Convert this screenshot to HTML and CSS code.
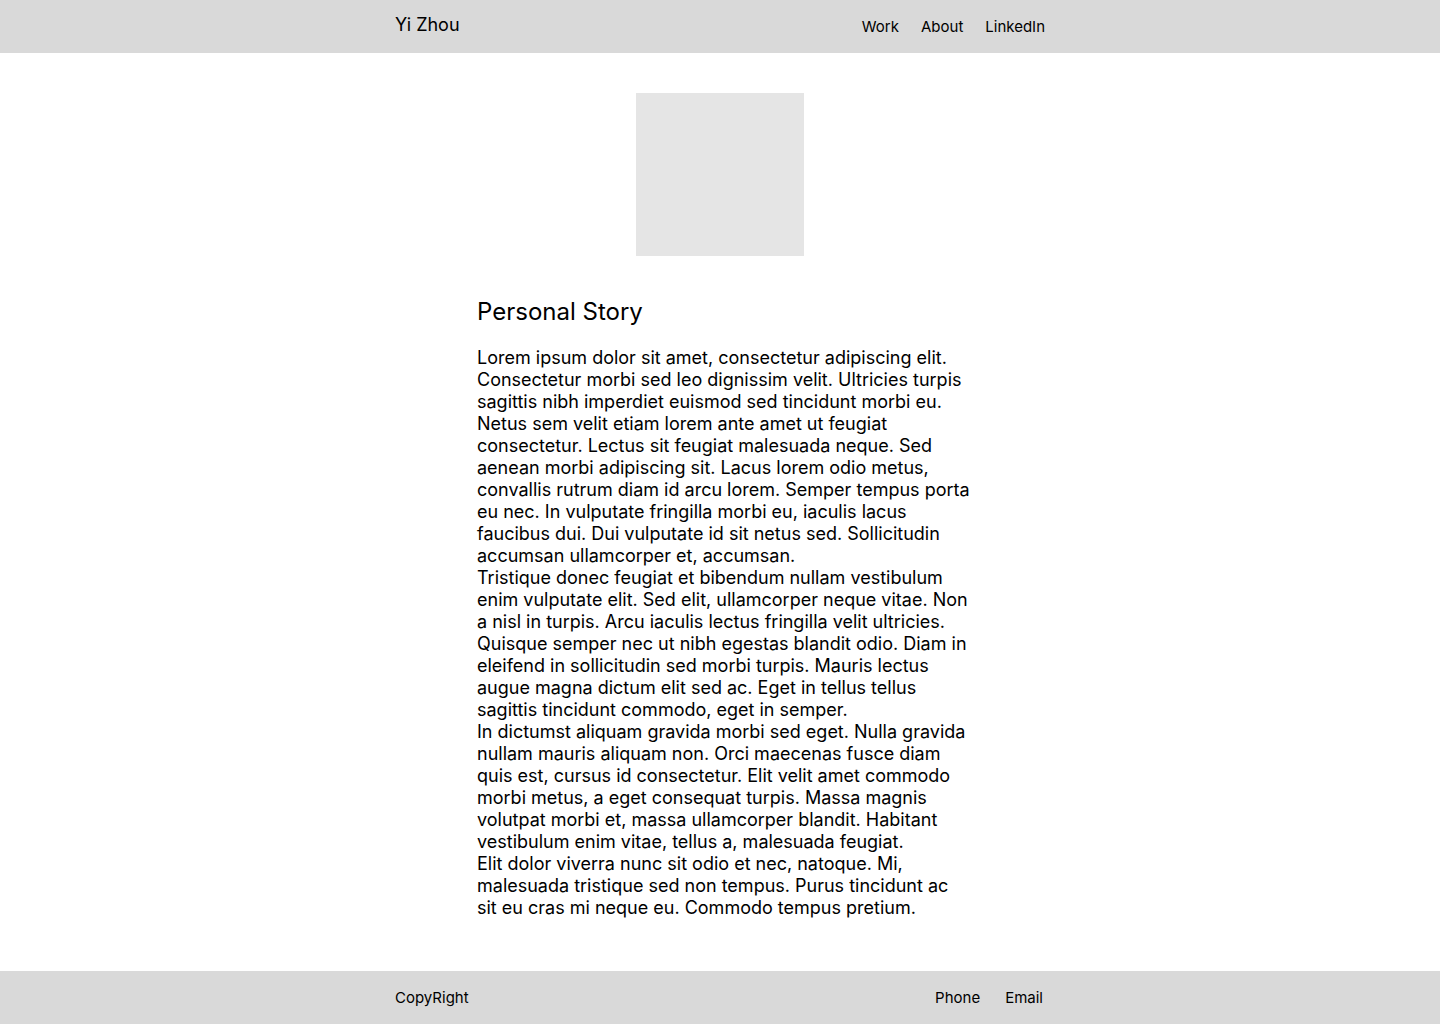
FILE: index.html
```html
<!DOCTYPE html>
<html lang="en">
<head>
<meta charset="utf-8">
<title>Yi Zhou</title>
<link rel="stylesheet" href="styles.css">
</head>
<body>
<header class="bar">
  <div class="bar-inner">
    <div class="brand">Yi Zhou</div>
    <nav class="nav">
      <a href="#">Work</a>
      <a href="#">About</a>
      <a href="#">LinkedIn</a>
    </nav>
  </div>
</header>
<main class="main">
  <div class="photo"></div>
  <section class="story">
    <h1 class="title">Personal Story</h1>
    <p>Lorem ipsum dolor sit amet, consectetur adipiscing elit. Consectetur morbi sed leo dignissim velit. Ultricies turpis sagittis nibh imperdiet euismod sed tincidunt morbi eu. Netus sem velit etiam lorem ante amet ut feugiat consectetur. Lectus sit feugiat malesuada neque. Sed aenean morbi adipiscing sit. Lacus lorem odio metus, convallis rutrum diam id arcu lorem. Semper tempus porta eu nec. In vulputate fringilla morbi eu, iaculis lacus faucibus dui. Dui vulputate id sit netus sed. Sollicitudin accumsan ullamcorper et, accumsan.</p>
    <p>Tristique donec feugiat et bibendum nullam vestibulum enim vulputate elit. Sed elit, ullamcorper neque vitae. Non a nisl in turpis. Arcu iaculis lectus fringilla velit ultricies. Quisque semper nec ut nibh egestas blandit odio. Diam in eleifend in sollicitudin sed morbi turpis. Mauris lectus augue magna dictum elit sed ac. Eget in tellus tellus sagittis tincidunt commodo, eget in semper.</p>
    <p>In dictumst aliquam gravida morbi sed eget. Nulla gravida nullam mauris aliquam non. Orci maecenas fusce diam quis est, cursus id consectetur. Elit velit amet commodo morbi metus, a eget consequat turpis. Massa magnis volutpat morbi et, massa ullamcorper blandit. Habitant vestibulum enim vitae, tellus a, malesuada feugiat.</p>
    <p>Elit dolor viverra nunc sit odio et nec, natoque. Mi, malesuada tristique sed non tempus. Purus tincidunt ac sit eu cras mi neque eu. Commodo tempus pretium.</p>
  </section>
</main>
<footer class="bar">
  <div class="bar-inner">
    <div class="foot-left">CopyRight</div>
    <nav class="nav foot-nav">
      <a href="#">Phone</a>
      <a href="#">Email</a>
    </nav>
  </div>
</footer>
</body>
</html>
```

FILE: styles.css
```css
* { box-sizing: border-box; }
html, body { margin: 0; padding: 0; }
body {
  font-family: Inter, "Noto Sans", sans-serif;
  color: #000;
  background: #fff;
}
.bar {
  background: #d9d9d9;
  height: 53px;
}
.bar-inner {
  width: 650px;
  margin: 0 auto;
  height: 100%;
  display: flex;
  align-items: center;
  justify-content: space-between;
}
.brand {
  font-size: 18px;
  line-height: 22px;
  margin-top: -3px;
}
.nav {
  display: flex;
  gap: 22px;
  font-size: 15px;
  line-height: 18px;
}
.nav a { color: #000; text-decoration: none; }
.foot-left { font-size: 15px; line-height: 18px; }
.foot-nav { gap: 25px; margin-right: 2px; }
.main {
  width: 650px;
  margin: 0 auto;
  padding: 40px 0 52px;
  display: flex;
  flex-direction: column;
}
.photo {
  width: 168px;
  height: 163px;
  background: #e5e5e5;
  align-self: center;
}
.story {
  margin-left: 82px;
  width: 495px;
  padding-top: 41px;
}
.title {
  font-size: 24px;
  line-height: 29px;
  font-weight: 400;
  margin: 0 0 21px;
}
.story p {
  font-size: 18px;
  line-height: 22px;
  margin: 0;
}
```
